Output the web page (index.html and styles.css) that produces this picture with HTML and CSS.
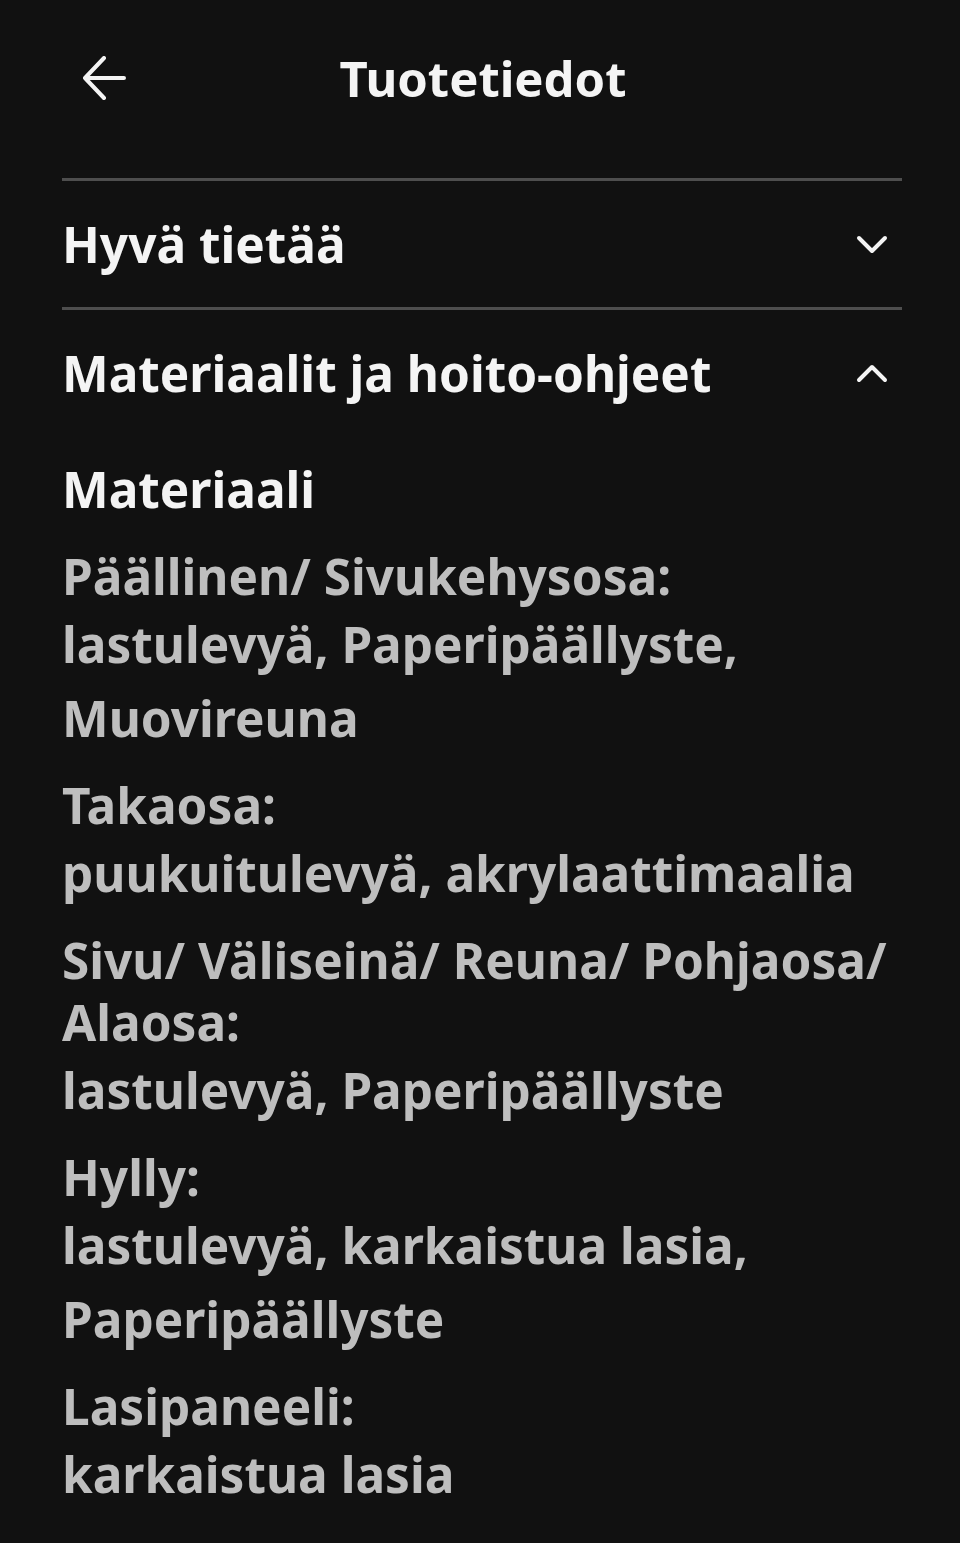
FILE: index.html
```html
<!DOCTYPE html>
<html lang="fi">
<head>
  <meta charset="UTF-8" />
  <meta name="viewport" content="width=device-width, initial-scale=1.0"/>
  <title>Tuotetiedot</title>
  <link rel="stylesheet" href="styles.css">
</head>
<body>
  <header class="top-bar">
    <button class="back-btn" aria-label="Takaisin">
      <svg width="44" height="44" viewBox="0 0 44 44" fill="none" stroke="currentColor" stroke-width="4" stroke-linecap="round" stroke-linejoin="round">
        <path d="M42 22H3M22 2L3 22l19 20"/>
      </svg>
    </button>
    <h1 class="page-title">Tuotetiedot</h1>
  </header>

  <main class="content">
    <!-- suljettu osio -->
    <section class="accordion">
      <div class="accordion-head">
        <h2>Hyvä tietää</h2>
        <svg class="chevron" width="32" height="20" viewBox="0 0 32 20" fill="none" stroke="currentColor" stroke-width="4" stroke-linecap="round" stroke-linejoin="round">
          <path d="M3 4l13 13L29 4"/>
        </svg>
      </div>
    </section>

    <!-- avattu osio -->
    <section class="accordion open">
      <div class="accordion-head">
        <h2>Materiaalit ja hoito-ohjeet</h2>
        <svg class="chevron" width="32" height="20" viewBox="0 0 32 20" fill="none" stroke="currentColor" stroke-width="4" stroke-linecap="round" stroke-linejoin="round">
          <path d="M3 17L16 4l13 13"/>
        </svg>
      </div>

      <div class="accordion-body">
        <h3 class="sub-title">Materiaali</h3>

        <div class="material">
          <p class="material-label">Päällinen/ Sivukehysosa:</p>
          <p class="material-value">lastulevyä, Paperipäällyste, Muovireuna</p>
        </div>
        <div class="material">
          <p class="material-label">Takaosa:</p>
          <p class="material-value">puukuitulevyä, akrylaattimaalia</p>
        </div>
        <div class="material">
          <p class="material-label">Sivu/ Väliseinä/ Reuna/ Pohjaosa/ Alaosa:</p>
          <p class="material-value">lastulevyä, Paperipäällyste</p>
        </div>
        <div class="material">
          <p class="material-label">Hylly:</p>
          <p class="material-value">lastulevyä, karkaistua lasia, Paperipäällyste</p>
        </div>
        <div class="material">
          <p class="material-label">Lasipaneeli:</p>
          <p class="material-value">karkaistua lasia</p>
        </div>
      </div>
    </section>
  </main>
</body>
</html>
```

FILE: styles.css
```css
:root {
  --bg: #111111;
  --text: #f4f4f4;
  --muted: #bebebe;
  --line: #4e4e4e;
  --font: 'Noto Sans', 'Open Sans', sans-serif;
}

body {
  margin: 0;
  background-color: var(--bg);
  color: var(--text);
  font-family: var(--font);
  font-weight: 700;
}

.top-bar {
  display: flex;
  align-items: center;
  height: 156px;
  padding: 0 62px 0 82px;
}

.back-btn {
  display: flex;
  padding: 0;
  border: none;
  background: none;
  color: var(--text);
  cursor: pointer;
}

.page-title {
  flex: 1;
  margin: 0 0 0 -44px;
  padding-right: 14px;
  text-align: center;
  font-size: 49px;
  line-height: 1;
}

.content {
  padding: 22px 58px 0 62px;
}

.accordion {
  border-top: 3px solid var(--line);
}

.accordion-head {
  display: flex;
  align-items: center;
  justify-content: space-between;
  height: 126px;
}

.accordion-head h2 {
  margin: 0;
  font-size: 49.5px;
}

.chevron {
  margin-right: 14px;
  color: var(--text);
}

.accordion-body {
  padding-top: 16px;
}

.sub-title {
  margin: 0 0 19px;
  font-size: 49.5px;
  line-height: 74px;
}

.material {
  margin-bottom: 19px;
  color: var(--muted);
  font-size: 49.5px;
}

.material p {
  margin: 0;
}

.material-label {
  line-height: 62px;
}

.material-value {
  line-height: 74px;
}
```
